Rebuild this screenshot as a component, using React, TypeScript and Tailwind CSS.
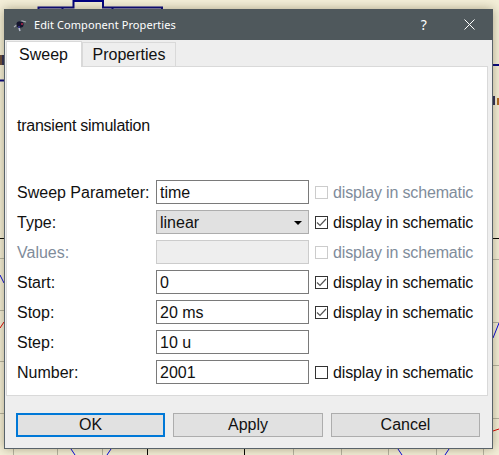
const font = "font-['Liberation_Sans',Arial,sans-serif]";

type Row = {
  label: string;
  value?: string;
  kind?: "input" | "combo" | "disabled";
  display?: "on" | "off" | "disabled";
  muted?: boolean;
};

const rows: Row[] = [
  { label: "Sweep Parameter:", value: "time", display: "disabled" },
  { label: "Type:", value: "linear", kind: "combo", display: "on" },
  { label: "Values:", kind: "disabled", display: "disabled", muted: true },
  { label: "Start:", value: "0", display: "on" },
  { label: "Stop:", value: "20 ms", display: "on" },
  { label: "Step:", value: "10 u" },
  { label: "Number:", value: "2001", display: "off" },
];

// Schematic peeking out around the dialog
function Schematic() {
  return (
    <svg className="absolute inset-0" width="499" height="455" fill="none">
      <path d="M38.5 9V7.5H62.5M62.5 9V7.5H73.5V1H103V7.5H112.5V9M112.5 7.5H162V9" stroke="#000080" strokeWidth="2" />
      <path d="M0 80.5H4M493 65H499" stroke="#000080" strokeWidth="2" />
      <path d="M0 238.5H4M493 238.5H499M147.5 449V455M244.5 449V455" stroke="#000" />
      <path
        d="M0 258.5H4M0 310.5H4M0 361.5H4M0 413.5H4M493 259.5H499M493 322.5H499M493 365.5H499M493 418.5H499M13.5 449V455M57.5 449V455M102.5 449V455M293.5 449V455M341.5 449V455M388.5 449V455M436.5 449V455M483.5 449V455"
        stroke="#b5b3a2"
      />
      <path d="M0 275L4 283M493 338L499 323M71 449L75 455M111 449L107 455M398 449L402 455M449 449L445 455" stroke="#0000e0" />
      <path d="M0 328L4 322M493 431L499 429" stroke="#e00000" />
      <rect x="0" y="55" width="2" height="10" fill="#6b4a3a" />
      <rect x="2" y="55" width="2" height="10" fill="#2a2a55" />
      <rect x="493" y="96" width="2" height="9" fill="#2a2a55" />
      <rect x="497" y="98" width="2" height="7" fill="#b06a20" />
    </svg>
  );
}

function AppIcon() {
  return (
    <svg width="16" height="14" viewBox="0 0 16 14" fill="none" className="mr-[5px] ml-[9px]">
      <path d="M1 9L5 6L9 3L13 4" stroke="#a9adb5" strokeWidth="1.2" />
      <path d="M6 10L7 13" stroke="#b9c0d0" strokeWidth="1.5" />
      <ellipse cx="7" cy="6.5" rx="3.6" ry="3.2" fill="#15152e" />
      <rect x="8" y="5" width="2" height="2" fill="#8a2040" />
      <rect x="5" y="8" width="2" height="2" fill="#30307a" />
    </svg>
  );
}

function Check({ state }: { state: "on" | "off" | "disabled" }) {
  return (
    <span
      className={
        "flex h-[13px] w-[13px] items-center justify-center border bg-white " +
        (state === "disabled" ? "border-[#cccccc]" : "border-[#333333]")
      }
    >
      {state === "on" && (
        <svg width="11" height="11" viewBox="0 0 11 11" fill="none">
          <path d="M1 5.5L4 8.5L10 2" stroke="#555555" strokeWidth="1.2" />
        </svg>
      )}
    </span>
  );
}

function Field({ row }: { row: Row }) {
  if (row.kind === "combo") {
    return (
      <div className="flex h-[24px] w-[153px] items-center justify-between border border-[#adadad] bg-[#e1e1e1] pr-[4px] pl-[3px] text-[#111]">
        <span className="pt-[2px]">{row.value}</span>
        <span className="mt-[1px] mr-[2px] h-0 w-0 border-x-[4px] border-t-[4px] border-x-transparent border-t-black" />
      </div>
    );
  }
  if (row.kind === "disabled") {
    return <div className="h-[24px] w-[153px] border border-[#cccccc] bg-[#eeeeee]" />;
  }
  return (
    <div className="flex h-[24px] w-[153px] items-center border border-[#7a7a7a] bg-white pt-[2px] pl-[3px] text-[#111]">
      {row.value}
    </div>
  );
}

function FormRow({ row }: { row: Row }) {
  return (
    <div className="flex h-[24px] items-center">
      <span className={"w-[139px] pt-[2px] " + (row.muted ? "text-[#7f8c9b]" : "text-[#111]")}>{row.label}</span>
      <Field row={row} />
      {row.display && (
        <div className="ml-[6px] flex items-center gap-[5px]">
          <Check state={row.display} />
          <span className={"pt-[2px] tracking-[-0.15px] " + (row.display === "disabled" ? "text-[#7f8c9b]" : "text-[#111]")}>
            display in schematic
          </span>
        </div>
      )}
    </div>
  );
}

function DialogButton({ label, focused, className }: { label: string; focused?: boolean; className: string }) {
  return (
    <div
      className={
        "flex h-[24px] items-center justify-center bg-[#e1e1e1] text-[#111] " +
        className +
        " " +
        (focused ? "border-2 border-[#0078d7]" : "border border-[#adadad]")
      }
    >
      {label}
    </div>
  );
}

export default function App() {
  return (
    <div className={"relative h-[455px] w-[499px] overflow-hidden bg-[#f4efd9] text-[16px] leading-none " + font}>
      <Schematic />

      <div className="relative mt-0 ml-[4px] flex h-[440px] w-[489px] translate-y-[9px] flex-col border-x border-b border-[#59636a] bg-[#eeeeee] shadow-[0_0_10px_rgba(80,70,30,0.45)]">
        {/* Title bar */}
        <div className="-mx-px flex h-[31px] shrink-0 items-center bg-[#4f585c] text-[11px] tracking-[0.08px] text-white font-['Noto_Sans',sans-serif]">
          <AppIcon />
          <span>Edit Component Properties</span>
          <span className="ml-auto text-[14px]">?</span>
          <svg width="11" height="11" viewBox="0 0 11 11" className="mr-[18px] ml-[37px]" fill="none">
            <path d="M0.5 0.5L10.5 10.5M10.5 0.5L0.5 10.5" stroke="#fff" />
          </svg>
        </div>

        {/* Tabs */}
        <div className="flex h-[26px] shrink-0 items-end pl-px">
          <div className="relative z-10 -mb-px flex h-[26px] w-[76px] items-center justify-center border-x border-t border-[#d9d9d9] bg-white pr-[1px] text-[#111]">
            Sweep
          </div>
          <div className="flex h-[24px] w-[94px] items-center justify-center border-x border-t border-[#d9d9d9] text-[#111]">
            Properties
          </div>
        </div>

        {/* Sweep pane */}
        <div className="mr-[4px] ml-px flex h-[330px] shrink-0 flex-col border border-[#d9d9d9] bg-white px-[10px]">
          <p className="mt-[51px] h-[16px] tracking-[-0.25px] text-[#111]">transient simulation</p>
          <div className="mt-[46px] flex flex-col gap-[6px]">
            {rows.map((row) => (
              <FormRow key={row.label} row={row} />
            ))}
          </div>
        </div>

        {/* Buttons */}
        <div className="mt-[17px] flex gap-[8px] pl-[11px]">
          <DialogButton label="OK" focused className="w-[149px]" />
          <DialogButton label="Apply" className="w-[150px]" />
          <DialogButton label="Cancel" className="w-[149px]" />
        </div>
      </div>
    </div>
  );
}
